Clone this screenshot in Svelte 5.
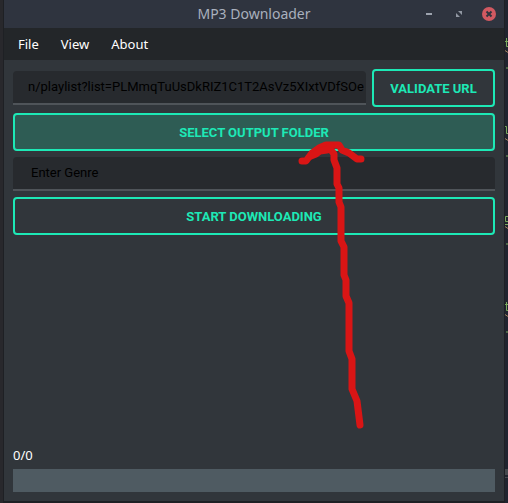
<script>
  let url = $state('n/playlist?list=PLMmqTuUsDkRIZ1C1T2AsVz5XIxtVDfSOe');
  let genre = $state('');
  const done = 0;
  const total = 0;
  const menus = ['File', 'View', 'About'];
</script>

<div class="desktop">
  <div class="editor" aria-hidden="true">
    <svg width="3" height="503" viewBox="0 0 3 503" fill="none">
      <g stroke="#78a85c">
        <path d="M0 41.5h3M1.500 38v8.500h1.500M1 68h2" />
        <path d="M0 126.500h1.500v7h1.500M1 156h2" />
        <path d="M3 216.500H.5v5H3M0 224.500h3M1 244h2" />
        <path d="M0 304.500h3M1.500 302v8.500h1.500M1 332h2" />
      </g>
      <path stroke="#a2825e" d="M0 50.500l3 2M0 138.500l3 2M0 226.500l3 2M0 314.500l3 2" />
      <path fill="#46494e" d="M0 469h3v6H0zM0 477h3v1H0z" />
    </svg>
  </div>

  <main class="window">
    <header class="titlebar">
      <h1>MP3 Downloader</h1>
      <div class="controls">
        <button aria-label="Minimize">
          <svg width="14" height="14" viewBox="0 0 14 14"><path fill="#9da3ae" d="M4 6h6v2H4z" /></svg>
        </button>
        <button aria-label="Maximize">
          <svg width="14" height="14" viewBox="0 0 14 14"><path fill="#9298a3" d="M6 4h4v4zM4 6l4 4H4z" /></svg>
        </button>
        <button aria-label="Close">
          <svg width="14" height="14" viewBox="0 0 14 14">
            <circle cx="7" cy="7" r="7" fill="#d15961" />
            <path d="M4.500 4.500l5 5M9.500 4.500l-5 5" stroke="#2f343f" stroke-width="2" />
          </svg>
        </button>
      </div>
    </header>

    <nav class="menubar">
      {#each menus as menu}
        <button>{menu}</button>
      {/each}
    </nav>

    <section class="content">
      <div class="url-row">
        <input class="field url" type="text" aria-label="Playlist URL" bind:value={url} />
        <button class="action validate">VALIDATE URL</button>
      </div>
      <button class="action active">SELECT OUTPUT FOLDER</button>
      <input class="field" type="text" aria-label="Genre" placeholder="Enter Genre" bind:value={genre} />
      <button class="action">START DOWNLOADING</button>
      <div class="status">
        <span id="count">{done}/{total}</span>
        <div class="progress" role="progressbar" aria-labelledby="count" aria-valuenow={done}></div>
      </div>
    </section>
  </main>

  <svg class="arrow" width="72" height="292" viewBox="0 0 72 292" fill="none" stroke="#d91515" stroke-width="7" stroke-linecap="round" stroke-linejoin="round" aria-hidden="true">
    <path d="M62 285L59 261 54 249V219L51 211V163L48 156V140L46 135V107L43 101V67L41 62V48L39 44V28L36 20V14L33 10 27 6" />
    <path d="M4 21H8L14 13 21 8 28 5H41L44 10 51 13 59 19H63" />
    <path d="M13 16L18 14 22 11 29 10 33 6" />
  </svg>
</div>

<style>
  :global(body) {
    margin: 0;
    background: #1c1f26;
  }

  .desktop {
    position: relative;
    box-sizing: border-box;
    display: flex;
    min-height: 100vh;
    padding: 0 4px 2px;
    overflow: hidden;
    background: linear-gradient(90deg, #28282c 0 3px, #1e2024 3px calc(100% - 3px), #20242f calc(100% - 3px));
    font-family: Roboto, "Noto Sans", sans-serif;
    font-size: 13px;
  }

  .editor {
    position: absolute;
    top: 0;
    right: 0;
  }

  .editor svg {
    display: block;
  }

  .window {
    flex: 1;
    display: flex;
    flex-direction: column;
    min-width: 0;
    background: #31363b;
  }

  button {
    padding: 0;
    border: 0;
    background: none;
    font: inherit;
    color: inherit;
  }

  .titlebar {
    display: grid;
    grid-template-columns: 1fr auto 1fr;
    align-items: center;
    height: 28px;
    background: #2f343f;
  }

  h1 {
    grid-column: 2;
    margin: 0;
    font: 400 14px/28px "Noto Sans", sans-serif;
    color: #a9b0bd;
  }

  .controls {
    display: flex;
    justify-content: flex-end;
    gap: 16px;
    padding-right: 8px;
  }

  .controls button {
    display: flex;
  }

  .menubar {
    display: flex;
    gap: 22px;
    height: 32px;
    padding: 0 14px;
    background: #232629;
    font: 400 13px/32px "Noto Sans", sans-serif;
    color: #fff;
  }

  .content {
    flex: 1;
    display: flex;
    flex-direction: column;
    gap: 6px;
    padding: 9px;
  }

  .url-row {
    display: flex;
    align-items: center;
    gap: 6px;
  }

  .field {
    box-sizing: border-box;
    width: 100%;
    min-width: 0;
    height: 34px;
    padding: 0 18px 2px;
    border: 0;
    border-bottom: 2px solid #4f5459;
    border-radius: 4px 4px 0 0;
    outline: 0;
    background: #272a2e;
    font: 400 13px/30px Roboto, sans-serif;
    color: #000;
  }

  .field::placeholder {
    color: #000;
    opacity: 1;
  }

  .url {
    flex: 1;
    padding: 0 2px 2px 15px;
  }

  .action {
    box-sizing: border-box;
    height: 38px;
    border: 2px solid #1de9b6;
    border-radius: 4px;
    font-weight: 700;
    color: #1de9b6;
  }

  .validate {
    min-width: 123px;
    padding: 0 16px;
  }

  .active {
    background: #2e5c54;
  }

  .status {
    display: flex;
    flex-direction: column;
    gap: 5px;
    margin-top: auto;
    font: 400 13px/18px "Noto Sans", sans-serif;
    color: #fff;
  }

  .progress {
    height: 23px;
    background: #4f5b62;
  }

  .arrow {
    position: absolute;
    top: 140px;
    left: 298px;
    pointer-events: none;
  }
</style>
